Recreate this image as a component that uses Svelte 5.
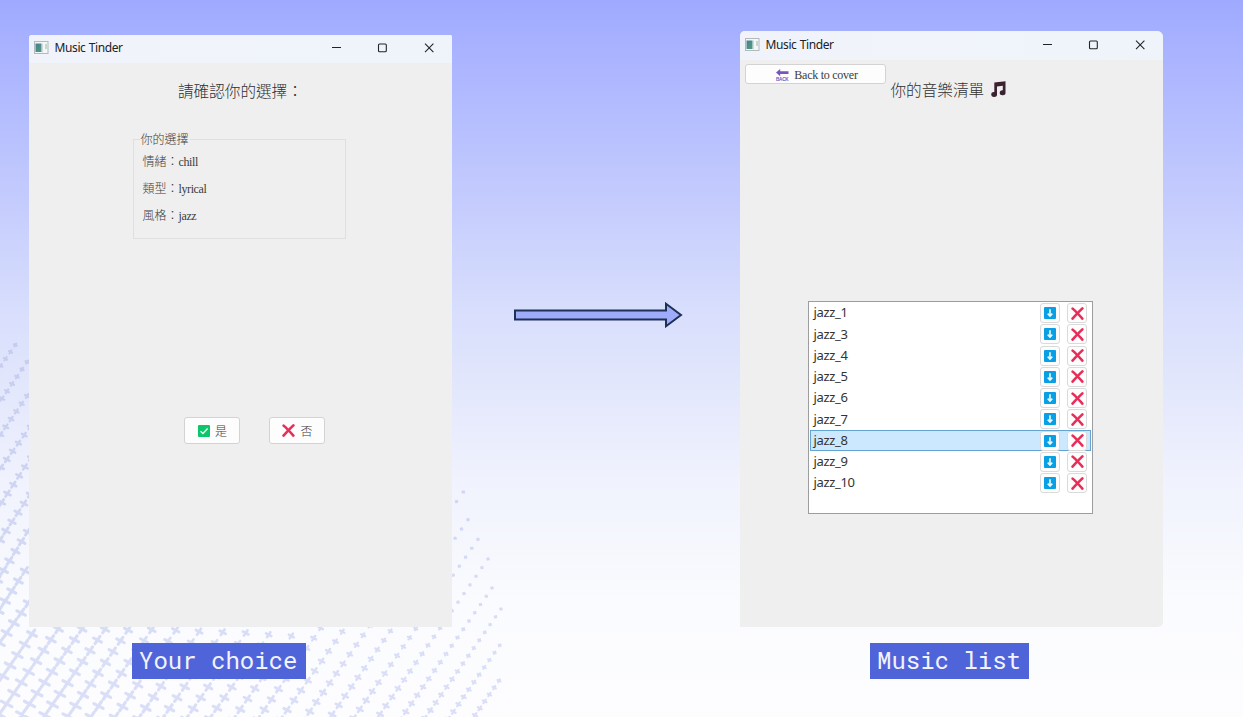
<script>
  const songs = ['jazz_1', 'jazz_3', 'jazz_4', 'jazz_5', 'jazz_6', 'jazz_7', 'jazz_8', 'jazz_9', 'jazz_10'];
  const selected = 'jazz_8';
  const choices = [['情緒', 'chill'], ['類型', 'lyrical'], ['風格', 'jazz']];

  // Each strand of the background texture: start x, y, step x, y, number of marks.
  const strands = [
    [15.3, 345, -4.9, 6.9, 4], [27, 362, -5, 7.3, 6], [27, 396, -5.3, 7.7, 6],
    [30, 427, -5.8, 8.1, 6], [30.7, 458, -5.8, 8.9, 6], [30, 494.5, -6, 9.1, 6],
    [27.5, 532, -6, 9.6, 6], [25, 571, -6.6, 10, 5], [28.3, 603, -7.2, 10, 5],
    [32, 634, -7.3, 10.5, 5], [58.3, 629, -7.4, 10.7, 9], [82, 629, -7.5, 10.7, 10],
    [105, 629.3, -7.5, 10.75, 10], [128, 630, -7.5, 10.8, 10], [151.7, 629.7, -7.6, 10.9, 10],
    [175.7, 630.3, -7.6, 10.9, 10], [199, 631.7, -7.6, 10.9, 9], [222.7, 632.3, -7.6, 10.9, 9],
    [245.7, 633, -7.5, 10.8, 9], [268.7, 634.7, -7.4, 10.5, 9], [291.3, 636, -7.3, 10.5, 9],
    [320.7, 628, -7.04, 10.2, 10], [342.3, 631.7, -6.9, 9.8, 10], [463.3, 492, -6.68, 9.55, 25],
    [468, 519.7, -6.47, 9.28, 22], [478, 539.3, -6.22, 8.95, 21], [488, 559, -6, 8.63, 20],
    [492, 588, -5.75, 8.25, 17], [501, 609, -5.44, 7.8, 15], [499.7, 645.3, -5.15, 7.37, 11],
    [499, 680.7, -4.8, 6.9, 6]
  ];
  const marks = strands.flatMap(([x, y, dx, dy, n]) =>
    Array.from({ length: n }, (_, i) => {
      const px = x + dx * i;
      const py = y + dy * i;
      const s = Math.max(1, 6.2 - (717 - py) * 0.012 - px * 0.0082);
      const d = `M${px - s * 0.56} ${py + s * 0.82}L${px + s * 0.56} ${py - s * 0.82}M${px - s * 0.88} ${py - s * 0.46}L${px + s * 0.88} ${py + s * 0.46}`;
      return { d, w: Math.min(3.2, 1.6 + s * 0.33) };
    })
  );
</script>

{#snippet titlebar()}
  <header class="titlebar">
    <svg class="appicon" width="15" height="13" viewBox="0 0 15 13">
      <defs>
        <linearGradient id="pane" x1="0" y1="0" x2="1" y2="1">
          <stop offset="0" stop-color="#4a7d96" /><stop offset="1" stop-color="#4e9d7c" />
        </linearGradient>
      </defs>
      <rect x=".5" y=".5" width="13.5" height="12" fill="#f4f6f7" stroke="#b3b9bc" />
      <rect x="1.5" y="2.5" width="6" height="8.5" fill="url(#pane)" />
      <path d="M8.5 2.5V11.5" stroke="#d3dadb" />
      <path d="M12 3V8" stroke="#94b8a8" />
    </svg>
    <span class="apptitle">Music Tinder</span>
    <svg class="controls" width="104" height="12" viewBox="0 0 104 12" fill="none" stroke="#222429" stroke-width="1.1">
      <path d="M1 5.5H10" />
      <rect x="47.5" y="2" width="7.8" height="7.8" rx="1" />
      <path d="M94 1.7L102.4 10.1M102.4 1.7L94 10.1" />
    </svg>
  </header>
{/snippet}

{#snippet cross(size)}
  <svg width={size} height={size} viewBox="0 0 12 12" fill="none" stroke="#e92d59" stroke-width="2.4" stroke-linecap="round">
    <path d="M1.5 1.5Q5 4.5 10.5 10.7M10.5 1.3Q6 5.5 1.4 10.7" />
  </svg>
{/snippet}

<div class="stage">
  <svg class="texture" width="520" height="717" fill="none" stroke="url(#tint)" stroke-linecap="round">
    <defs>
      <linearGradient id="tint" gradientUnits="userSpaceOnUse" x1="0" y1="340" x2="0" y2="660">
        <stop offset="0" stop-color="#c5cbee" /><stop offset="1" stop-color="#dadff7" />
      </linearGradient>
    </defs>
    {#each marks as m}<path d={m.d} stroke-width={m.w} />{/each}
  </svg>

  <section class="column first">
    <main class="window">
      {@render titlebar()}
      <h1>請確認你的選擇：</h1>
      <fieldset>
        <legend>你的選擇</legend>
        {#each choices as [name, value]}
          <p>{name}：<span>{value}</span></p>
        {/each}
      </fieldset>
      <div class="answers">
        <button>
          <svg width="12" height="12" viewBox="0 0 12 12"><rect width="12" height="12" rx="1" fill="#0cc66c" /><path d="M2.5 6.2L4.9 8.5L9.6 3.5" fill="none" stroke="#eafff3" stroke-width="1.4" /></svg>
          <span>是</span>
        </button>
        <button>{@render cross(13)} <span>否</span></button>
      </div>
    </main>
    <div class="caption">Your choice</div>
  </section>

  <svg class="arrow" width="170" height="26" viewBox="0 0 170 26">
    <path d="M2 8.5H153V1.8L168 13L153 24.2V17.5H2Z" fill="#9fabfb" stroke="#1d3155" stroke-width="2" />
  </svg>

  <section class="column second">
    <main class="window">
      {@render titlebar()}
      <div class="toolbar">
        <button class="back">
          <svg width="13" height="12" viewBox="0 0 13 12">
            <path d="M0 3.6L4.2 0V2.3H12.5V4.9H4.2V7.2Z" fill="#7656bd" />
            <text x="0" y="11.7" textLength="12.5" lengthAdjust="spacingAndGlyphs">BACK</text>
          </svg>
          <span>Back to cover</span>
        </button>
        <h2>你的音樂清單
          <svg width="16" height="16" viewBox="0 0 16 16" fill="#3b2230"><path d="M4.3 1.6L15.5 .2V11.4A2.9 2.5 0 1 1 12.8 9.2V4.7L7 5.5V13.2A2.9 2.5 0 1 1 4.3 10.9Z" /></svg>
        </h2>
      </div>
      <ul>
        {#each songs as song}
          <li class:selected={song === selected}>
            <span>{song}</span>
            <button aria-label="Download">
              <svg width="12" height="12" viewBox="0 0 12 12"><rect width="12" height="12" rx="1" fill="#089fe5" /><path d="M6 2.3V8.5M3.7 6.6L6 9L8.3 6.6" fill="none" stroke="#e8faff" stroke-width="1.6" /></svg>
            </button>
            <button aria-label="Remove">{@render cross(13)}</button>
          </li>
        {/each}
      </ul>
    </main>
    <div class="caption">Music list</div>
  </section>
</div>

<style>
  :global(body) { margin: 0; overflow: hidden; }
  * { box-sizing: border-box; }
  .stage {
    position: relative;
    display: flex;
    width: 1243px;
    height: 717px;
    overflow: hidden;
    background: linear-gradient(#9faaff 0, #a7b1ff 40px, #d8defc 310px, #f0f2fd 480px, #fafbfe 600px, #fdfdfe 717px);
  }
  .texture { position: absolute; left: 0; top: 0; }
  .column { position: relative; width: 423px; flex: none; display: flex; flex-direction: column; align-items: flex-start; }
  .first { margin-left: 29px; padding-top: 35px; }
  .second { margin-left: 57px; padding-top: 31px; }
  .window {
    width: 423px;
    height: 592px;
    display: flex;
    flex-direction: column;
    background: #efefef;
    color: #3c3c3c;
    overflow: hidden;
    border-radius: 3px 2px 0 0;
    font: 300 12px/16px "Liberation Serif", "Noto Sans CJK TC", serif;
  }
  .second .window { height: 596px; border-radius: 5px 6px 5px 0; }
  .titlebar {
    height: 28px;
    flex: none;
    display: flex;
    align-items: center;
    padding: 0 17px 3px 5px;
    background: linear-gradient(90deg, #f1f3fb, #eff4fa);
  }
  .second .titlebar { height: 29px; padding-bottom: 2px; }
  .appicon { flex: none; }
  .apptitle { margin-left: 5.5px; font: 400 12px/16px "Noto Sans", sans-serif; letter-spacing: -.39px; word-spacing: .5px; color: #222; }
  .controls { margin-left: auto; }
  h1, h2 { margin: 0; font: 300 15.6px/20px "Noto Sans CJK TC", sans-serif; color: #303030; }
  h1 { margin: 17px 0 0 149px; }
  fieldset {
    width: 213px;
    height: 109px;
    margin: 30px 0 0 104px;
    padding: 0 8px 0 8.5px;
    border: 1px solid #dedfe0;
    min-width: 0;
    flex: none;
  }
  legend { margin-left: -3px; padding: 2px 1px 0; height: 18px; line-height: 16px; }
  p { margin: 0 0 11px; padding: 0; height: 16px; line-height: 16px; }
  p:first-of-type { margin-top: 6px; }
  p span { letter-spacing: -.4px; }
  .answers { display: flex; gap: 29px; margin: 178px 0 0 154.5px; }
  button {
    display: flex;
    align-items: center;
    justify-content: center;
    padding: 0;
    background: #fdfdfd;
    border: 1px solid #d3d3d3;
    border-radius: 3px;
    color: inherit;
    font: inherit;
  }
  .answers button { width: 56px; height: 27px; gap: 5px; padding-left: 2px; }
  .answers span { padding-top: 3px; }
  .caption {
    height: 36px;
    margin: 16px 0 0 103px;
    padding: 0 9px 0 7px;
    width: 174px;
    background: #5064d9;
    color: #f2f3ff;
    font: 24px/35px "Roboto Mono", "Liberation Mono", monospace;
    white-space: pre;
  }
  .second .caption { width: 159px; margin-left: 130px; }
  .arrow { flex: none; margin: 302px 0 0 61px; }
  .toolbar { display: flex; padding: 4px 0 0 5px; height: 49px; flex: none; }
  .back { width: 141px; height: 20px; gap: 5px; padding-left: 3px; letter-spacing: -.25px; }
  .back svg { margin-top: 1px; }
  .back text { font: bold 4.6px "Liberation Sans", sans-serif; fill: #7656bd; }
  .back span { padding-top: 2px; }
  h2 { display: flex; align-items: center; align-self: flex-start; gap: 6px; margin: 15px 0 0 4.5px; height: 20px; }
  h2 svg { flex: none; }
  ul {
    list-style: none;
    width: 285px;
    height: 213px;
    margin: 192px 0 0 68px;
    padding: .5px 1px 0;
    background: #fff;
    border: 1px solid #9c9d9f;
  }
  li {
    display: flex;
    align-items: center;
    height: 21.25px;
    padding: 0 3px 0 2.5px;
    border: 1px solid transparent;
    font: 13px/18px "Noto Sans", sans-serif;
    letter-spacing: -.35px;
    color: #333;
  }
  li span { flex: 1; padding-bottom: 1.5px; }
  li.selected { background: #cce8ff; border-color: #63a4d3; }
  li button { width: 20px; height: 20px; border-color: #dadada; flex: none; }
  li button + button { margin-left: 7px; }
</style>
